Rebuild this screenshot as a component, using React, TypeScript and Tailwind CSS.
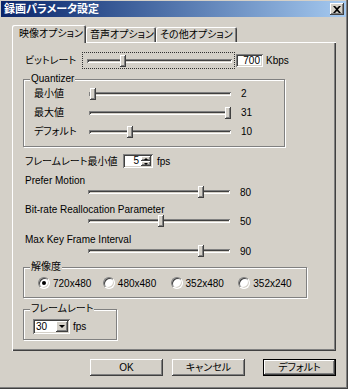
import React from 'react';

const raised =
  'shadow-[inset_-1px_-1px_#404040,inset_1px_1px_#ffffff,inset_-2px_-2px_#808080,inset_2px_2px_#d4d0c8]';
const sunken =
  'shadow-[inset_1px_1px_#808080,inset_-1px_-1px_#ffffff,inset_2px_2px_#404040,inset_-2px_-2px_#d4d0c8]';
const etched = 'border border-[#808080] shadow-[inset_1px_1px_#ffffff,1px_1px_0_#ffffff]';

const Track = ({ thumb, wide }: { thumb: number; wide?: boolean }) => (
  <div className={`relative h-[12px] ${wide ? 'w-[145px]' : 'w-[142px]'}`}>
    <div className="absolute left-0 right-0 top-[4px] h-[4px] shadow-[inset_1px_1px_#808080,inset_-1px_-1px_#ffffff,inset_2px_2px_#404040,inset_-2px_-2px_#d4d0c8]" />
    <div className={`absolute top-0 w-[6px] h-[12px] bg-[#d4d0c8] ${raised}`} style={{ left: thumb }} />
  </div>
);

const QRow = ({ label, thumb, value }: { label: string; thumb: number; value: string }) => (
  <div className="flex items-center h-[19px] pl-[10px]">
    <div className="w-[55px] whitespace-nowrap">{label}</div>
    <Track thumb={thumb} />
    <div className="ml-[10px]">{value}</div>
  </div>
);

const LabeledSlider = ({ label, thumb, value, gap }: { label: string; thumb: number; value: string; gap: string }) => (
  <div className={gap}>
    <div className="ml-[2px] h-[11px] leading-[11px] whitespace-nowrap">{label}</div>
    <div className="flex items-center h-[12px] ml-[65px]">
      <Track thumb={thumb} />
      <div className="ml-[10px]">{value}</div>
    </div>
  </div>
);

const Radio = ({ label, checked, w }: { label: string; checked?: boolean; w: string }) => (
  <div className={`flex items-center ${w}`}>
    <div className="relative w-[12px] h-[12px] rounded-full bg-white border border-t-[#808080] border-l-[#808080] border-r-[#ffffff] border-b-[#ffffff] shadow-[inset_1px_1px_#404040,inset_-1px_-1px_#d4d0c8] flex items-center justify-center">
      {checked && <div className="w-[4px] h-[4px] rounded-full bg-black" />}
    </div>
    <span className="ml-[3px]">{label}</span>
  </div>
);

const Legend = ({ children, left }: { children: React.ReactNode; left: string }) => (
  <div className={`absolute -top-[7px] ${left} px-px bg-[#d4d0c8] leading-[12px]`}>{children}</div>
);

const tabEdge = 'rounded-t-[2px] shadow-[inset_1px_1px_#ffffff,inset_-1px_0_#404040,inset_-2px_0_#808080] whitespace-nowrap overflow-hidden';

export default function App() {
  return (
    <div className="w-[348px] h-[389px] bg-[#d4d0c8] text-black text-[10px] font-['Liberation_Sans','Noto_Sans_CJK_JP',sans-serif] [font-feature-settings:'palt'] shadow-[inset_-1px_-1px_#404040,inset_-2px_-2px_#808080] flex flex-col">
      {/* title bar */}
      <div className="mt-px mx-px mr-[2px] h-[16px] flex items-center justify-between bg-gradient-to-r from-[#0a246a] to-[#a6caf0]">
        <span className="ml-[3px] text-white font-bold text-[11px] leading-[16px]">録画パラメータ設定</span>
        <div className={`mr-[2px] w-[14px] h-[12px] bg-[#d4d0c8] ${raised} flex items-center justify-center`}>
          <svg width="8" height="7" viewBox="0 0 8 7">
            <path d="M0 0h2l2 2 2-2h2L5 3.5 8 7H6L4 5 2 7H0l3-3.5z" fill="#000" />
          </svg>
        </div>
      </div>

      {/* tabs */}
      <div className="mt-[8px] ml-[12px] flex items-end h-[17px] relative z-10">
        <div className={`h-[18px] -mb-px w-[74px] pl-[7px] pt-[2px] bg-[#d4d0c8] leading-[14px] ${tabEdge}`}>
          映像オプション
        </div>
        <div className={`h-[15px] w-[70px] pl-[4px] leading-[15px] ${tabEdge}`}>音声オプション</div>
        <div className={`h-[15px] w-[81px] pl-[4px] leading-[15px] ${tabEdge}`}>その他オプション</div>
      </div>

      {/* panel */}
      <div className="ml-[12px] w-[324px] h-[309px] pl-[11px] pt-[10px] shadow-[inset_1px_1px_#ffffff,inset_-1px_-1px_#404040,inset_-2px_-2px_#808080]">
        {/* bitrate */}
        <div className="flex items-center h-[17px] ml-[2px]">
          <div className="w-[57px] whitespace-nowrap">ビットレート</div>
          <div className="w-[153px] h-[17px] border border-dotted border-[#303030] flex items-center pl-[4px]">
            <Track thumb={33} wide />
          </div>
          <div className={`ml-px w-[27px] h-[13px] bg-white ${sunken} text-right pr-[3px] leading-[13px]`}>700</div>
          <span className="ml-[3px]">Kbps</span>
        </div>

        {/* quantizer */}
        <div className={`relative mt-[10px] w-[262px] h-[68px] pt-[4px] ${etched}`}>
          <Legend left="left-[6px]">Quantizer</Legend>
          <QRow label="最小値" thumb={1} value="2" />
          <QRow label="最大値" thumb={136} value="31" />
          <QRow label="デフォルト" thumb={38} value="10" />
        </div>

        {/* min frame rate */}
        <div className="mt-[7px] ml-[2px] flex items-center h-[14px]">
          <div className="w-[98px] whitespace-nowrap">フレームレート最小値</div>
          <div className={`w-[30px] h-[14px] bg-white ${sunken} flex items-center`}>
            <span className="flex-1 text-right pr-[2px] leading-[12px]">5</span>
            <div className="w-[10px] h-[10px] mr-[2px] flex flex-col">
              <div className={`h-[5px] bg-[#d4d0c8] ${raised} flex items-center justify-center`}>
                <div className="w-0 h-0 border-l-[2px] border-r-[2px] border-b-[2px] border-l-transparent border-r-transparent border-b-black" />
              </div>
              <div className={`h-[5px] bg-[#d4d0c8] ${raised} flex items-center justify-center`}>
                <div className="w-0 h-0 border-l-[2px] border-r-[2px] border-t-[2px] border-l-transparent border-r-transparent border-t-black" />
              </div>
            </div>
          </div>
          <span className="ml-[4px]">fps</span>
        </div>

        <LabeledSlider gap="mt-[7px]" label="Prefer Motion" thumb={110} value="80" />
        <LabeledSlider gap="mt-[6px]" label="Bit-rate Reallocation Parameter" thumb={70} value="50" />
        <LabeledSlider gap="mt-[7px]" label="Max Key Frame Interval" thumb={110} value="90" />

        {/* resolution */}
        <div className={`relative mt-[10px] w-[284px] h-[31px] pt-[9px] pl-[14px] ${etched}`}>
          <Legend left="left-[6px]">解像度</Legend>
          <div className="flex items-center h-[12px]">
            <Radio label="720x480" checked w="w-[67px]" />
            <Radio label="480x480" w="w-[70px]" />
            <Radio label="352x480" w="w-[70px]" />
            <Radio label="352x240" w="w-[70px]" />
          </div>
        </div>

        {/* frame rate */}
        <div className={`relative mt-[11px] w-[94px] h-[31px] pt-[9px] pl-[9px] ${etched}`}>
          <Legend left="left-[6px]">フレームレート</Legend>
          <div className="flex items-center">
            <div className={`w-[37px] h-[15px] bg-white ${sunken} flex items-center`}>
              <span className="flex-1 pl-[3px] leading-[12px]">30</span>
              <div className={`w-[12px] h-[11px] mr-[2px] bg-[#d4d0c8] ${raised} flex items-center justify-center`}>
                <div className="w-0 h-0 border-l-[3px] border-r-[3px] border-t-[3px] border-l-transparent border-r-transparent border-t-black" />
              </div>
            </div>
            <span className="ml-[3px]">fps</span>
          </div>
        </div>
      </div>

      {/* buttons */}
      <div className="mt-[8px] flex justify-end pr-[12px]">
        <button className={`w-[73px] h-[17px] bg-[#d4d0c8] ${raised} leading-[17px]`}>OK</button>
        <button className={`ml-[9px] w-[73px] h-[17px] bg-[#d4d0c8] ${raised} leading-[17px]`}>キャンセル</button>
        <div className="ml-[18px] w-[73px] h-[17px] border border-black">
          <button className={`w-full h-full bg-[#d4d0c8] ${raised} leading-[15px]`}>デフォルト</button>
        </div>
      </div>
    </div>
  );
}
